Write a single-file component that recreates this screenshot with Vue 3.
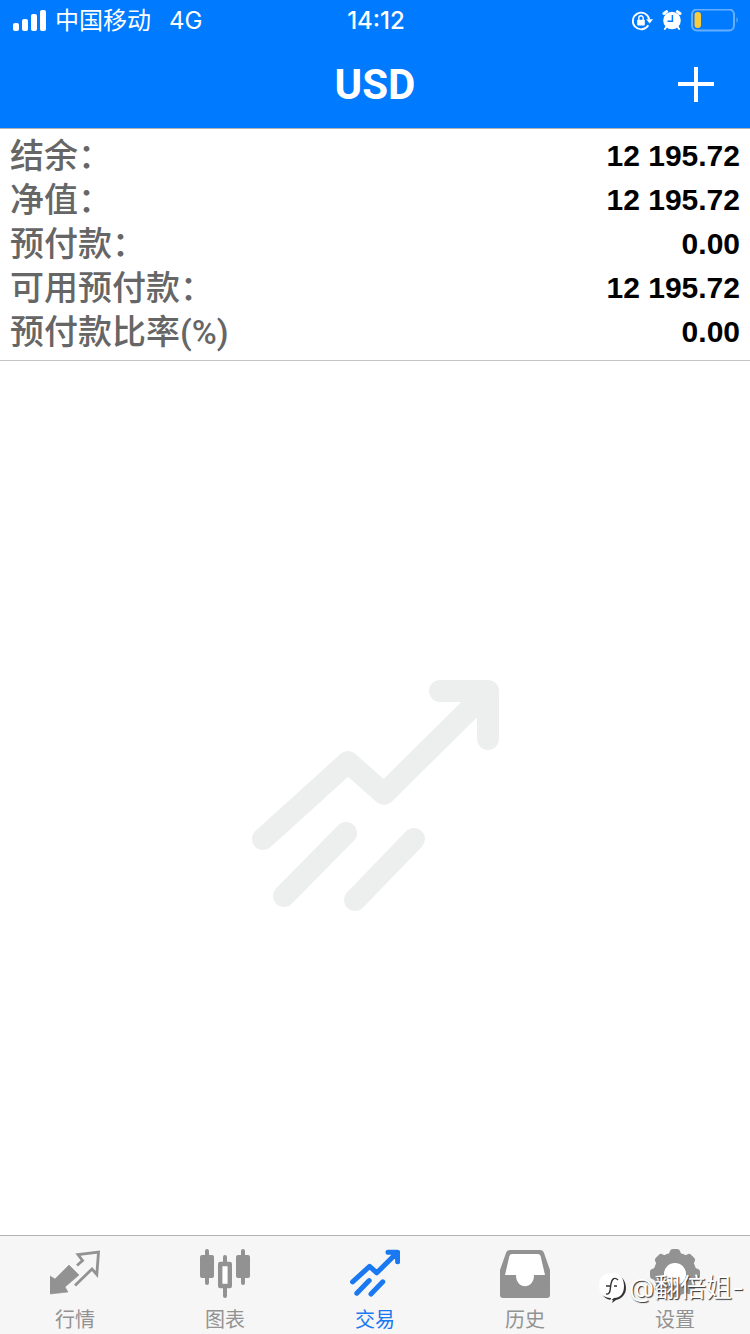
<template>
  <div class="screen">
    <header class="header">
      <div class="status">
        <div class="statusLeft">
          <svg class="signal" viewBox="0 0 34 22" width="34" height="22">
            <rect x="0" y="13" width="6" height="8" rx="2" />
            <rect x="9" y="9" width="6" height="12" rx="2" />
            <rect x="18" y="4" width="6" height="17" rx="2" />
            <rect x="27" y="0" width="6" height="21" rx="2" />
          </svg>
          <span>中国移动</span>
          <span class="network">4G</span>
        </div>
        <div class="time">14:12</div>
        <div class="statusRight">
          <!-- rotation lock -->
          <svg viewBox="0 0 22 22" width="22" height="22">
            <path d="M17.3 15.2 A8.3 8.3 0 1 1 18.3 9.5" fill="none" stroke="#fff" stroke-width="1.8" />
            <path d="M15.2 9.3 H22 L18.7 13.6 Z" fill="#fff" />
            <rect x="6.2" y="9.8" width="7.6" height="5.8" rx="0.8" fill="#fff" />
            <path d="M7.8 10 V8 a2.2 2.2 0 0 1 4.4 0 V10" fill="none" stroke="#fff" stroke-width="1.4" />
          </svg>
          <!-- alarm -->
          <svg viewBox="0 0 20 22" width="20" height="22">
            <circle cx="10" cy="10.5" r="8.8" fill="#fff" />
            <path d="M2 3.5 L4.6 1.6 M18 3.5 L15.4 1.6" stroke="#fff" stroke-width="3" stroke-linecap="round" />
            <path d="M4.6 16.5 L2.8 19 M15.4 16.5 L17.2 19" stroke="#fff" stroke-width="2" stroke-linecap="round" />
            <path d="M10.4 5 V11.3 H5.5" fill="none" stroke="#007aff" stroke-width="1.5" />
          </svg>
          <!-- battery -->
          <svg viewBox="0 0 48 24" width="48" height="24">
            <rect x="1" y="0.5" width="42" height="21" rx="5" fill="none" stroke="#66afff" stroke-width="2" />
            <path d="M45.5 8 q2.6 3 0 6 Z" fill="#66afff" />
            <rect x="3.5" y="3" width="6.5" height="16" rx="3" fill="#f8cb3c" />
          </svg>
        </div>
      </div>
      <div class="titleBar">
        <h1 class="title">USD</h1>
        <button class="add" type="button" aria-label="+">
          <svg viewBox="0 0 36 36" width="36" height="36">
            <path d="M0 17 H36 M18 0 V35" stroke="#fff" stroke-width="4" />
          </svg>
        </button>
      </div>
    </header>

    <dl class="summary">
      <div v-for="row in rows" :key="row.label" class="row">
        <dt>{{ row.label }}</dt>
        <dd>{{ row.value }}</dd>
      </div>
    </dl>

    <main class="empty">
      <svg class="emptyIcon" viewBox="0 0 250 236" width="250" height="236">
        <path :d="tradePath" />
      </svg>
    </main>

    <nav class="tabs">
      <a
        v-for="tab in tabs"
        :key="tab.id"
        href="#"
        class="tab"
        :class="{ tabActive: active === tab.id }"
        @click.prevent="active = tab.id"
      >
        <svg v-if="tab.id === 'quotes'" viewBox="0 0 50 50" width="50" height="50">
          <path d="M0 28 L5 31 L19 17 L29 27 L15 39 L18 44 L0 46 Z" fill="currentColor" stroke="currentColor" stroke-width="0.6" />
          <path d="M27 17.5 L32.5 12.5 L28 6.5 L48.5 4.2 L46.8 26.5 L42 21 L25 37.5" fill="none" stroke="currentColor" stroke-width="2.8" />
        </svg>
        <svg v-else-if="tab.id === 'chart'" viewBox="0 0 50 50" width="50" height="50">
          <path d="M7 3 V35 M43 3 V35 M25 9 V15 M25 38 V48" stroke="currentColor" stroke-width="4" stroke-linecap="round" />
          <rect x="0" y="7" width="14" height="23" rx="2" fill="currentColor" />
          <rect x="36" y="7" width="14" height="23" rx="2" fill="currentColor" />
          <rect x="20.2" y="16" width="9.6" height="22" fill="#fff" stroke="currentColor" stroke-width="4.4" stroke-linejoin="round" />
        </svg>
        <svg v-else-if="tab.id === 'trade'" viewBox="0 -10 250 250" width="50" height="50">
          <path class="tradeLine" :d="tradePath" />
        </svg>
        <svg v-else-if="tab.id === 'history'" viewBox="0 0 50 50" width="50" height="50">
          <path d="M10 2 H40 Q43 2 44 5 L50 22 V47 Q50 50 47 50 H3 Q0 50 0 47 V22 L6 5 Q7 2 10 2 Z" fill="currentColor" />
          <path d="M12 6 H38 Q40 6 40.6 8 L45 27 H34 C34 42 16 42 16 27 H5 L9.4 8 Q10 6 12 6 Z" fill="#fff" />
        </svg>
        <svg v-else viewBox="0 0 50 50" width="50" height="50">
          <circle cx="25" cy="26" r="16" fill="none" stroke="currentColor" stroke-width="11" />
          <circle cx="25" cy="26" r="11" fill="#fff" />
          <path
            v-for="n in 8"
            :key="n"
            d="M17 8 Q19.5 6 20 3 Q20.5 1 23 1 H27 Q29.5 1 30 3 Q30.5 6 33 8 Z"
            fill="currentColor"
            :transform="`rotate(${n * 45} 25 26)`"
          />
        </svg>
        <span>{{ tab.label }}</span>
      </a>
    </nav>

    <div class="mark">
      <svg viewBox="0 0 28 32" width="28" height="32">
        <path d="M13 3 C22 2 27 8 27 16 C27 23 22 27 17 28 L13 31 L14 28 C5 28 2 22 2 15 C2 8 6 3 13 3 Z" fill="#333" />
        <path d="M12 1 C21 0 25 6 25 14 C25 22 21 26 15 26 L11 29 L12 26 C4 26 0 21 0 13 C0 6 4 1 12 1 Z" fill="#fff" />
        <path d="M7 22 C12 23 11 16 12 12 C13 6 16 5 19 8 M7 14 H11 M15 14 H18" fill="none" stroke="#333" stroke-width="1.4" />
      </svg>
      <span>@翻倍姐-</span>
    </div>
  </div>
</template>

<script setup>
import { ref } from "vue";

const active = ref("trade");

// zigzag arrow with two short strokes below
const tradePath =
  "M13 159 L98 82 L134 114 L237 12 M190 11 H238 V59 M96 153 L34 216 M164 159 L105 220";

const rows = [
  { label: "结余：", value: "12 195.72" },
  { label: "净值：", value: "12 195.72" },
  { label: "预付款：", value: "0.00" },
  { label: "可用预付款：", value: "12 195.72" },
  { label: "预付款比率(%)", value: "0.00" },
];

const tabs = [
  { id: "quotes", label: "行情" },
  { id: "chart", label: "图表" },
  { id: "trade", label: "交易" },
  { id: "history", label: "历史" },
  { id: "settings", label: "设置" },
];
</script>

<style>
body {
  margin: 0;
}
</style>

<style scoped>
.screen {
  position: relative;
  display: flex;
  flex-direction: column;
  min-height: 100vh;
  background: #fff;
  font-family: Inter, "Noto Sans CJK SC", sans-serif;
}
.header {
  color: #fff;
  background: #007aff;
  border-bottom: 1px solid #b2b2b2;
}
.status {
  display: grid;
  grid-template-columns: 1fr auto 1fr;
  align-items: center;
  height: 40px;
  padding: 0 11px 0 13px;
  font-size: 24px;
  line-height: 42px;
}
.statusLeft,
.statusRight {
  display: flex;
  align-items: center;
}
.statusLeft {
  gap: 8px;
}
.signal {
  fill: #fff;
}
.network {
  margin-left: 10px;
}
.time {
  font-weight: 500;
}
.statusRight {
  justify-content: flex-end;
  gap: 9px;
}
.titleBar {
  display: grid;
  grid-template-columns: 1fr auto 1fr;
  align-items: center;
  height: 88px;
  padding: 0 36px;
}
.title {
  grid-column: 2;
  margin: 0;
  font-family: Roboto, "Liberation Sans", sans-serif;
  font-size: 42px;
  line-height: 90px;
}
.add {
  display: flex;
  justify-self: end;
  padding: 0;
  border: 0;
  background: none;
  cursor: pointer;
}
.summary {
  margin: 0;
  padding: 5px 10px 6px;
  border-bottom: 1px solid #c4c4c4;
  font-family: Roboto, "Noto Sans CJK SC", sans-serif;
  font-size: 34px;
  line-height: 44px;
}
.row {
  display: flex;
  justify-content: space-between;
  height: 44px;
}
.row dt {
  color: #666;
  font-weight: 500;
}
.row dd {
  margin: 0;
  color: #000;
  font-family: "Liberation Sans", Arial, sans-serif;
  font-size: 30px;
  font-weight: 700;
}
.empty {
  flex: 1;
  display: flex;
  align-items: center;
  justify-content: center;
}
.emptyIcon path,
.tradeLine {
  fill: none;
  stroke: #edefee;
  stroke-width: 22;
  stroke-linecap: round;
  stroke-linejoin: round;
}
.tradeLine {
  stroke: currentColor;
  stroke-width: 25;
}
.tabs {
  display: flex;
  height: 98px;
  border-top: 1px solid #b2b2b2;
  background: #f6f6f6;
}
.tab {
  flex: 1;
  display: flex;
  flex-direction: column;
  align-items: center;
  gap: 10px;
  padding-top: 12px;
  color: #929292;
  font-size: 20px;
  line-height: 24px;
  text-decoration: none;
}
.tabActive {
  color: #1a78f0;
}
.mark {
  position: absolute;
  right: 6px;
  bottom: 28px;
  display: flex;
  align-items: center;
  gap: 2px;
  color: #fff;
  font-size: 26px;
  line-height: 36px;
  text-shadow: 1px 1px 1px #333;
}
</style>
